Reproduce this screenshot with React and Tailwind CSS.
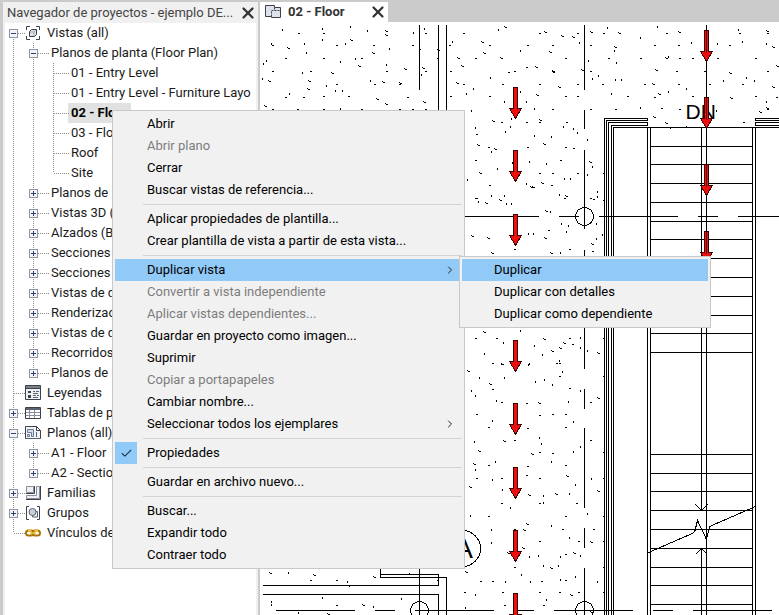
import { useState } from 'react';
import { X, Check, ChevronRight } from 'lucide-react';
import clsx from 'clsx';

const VIEW_GROUPS = [
  'Planos de', 'Vistas 3D (', 'Alzados (B', 'Secciones', 'Secciones',
  'Vistas de d', 'Renderizac', 'Vistas de d', 'Recorridos', 'Planos de',
];

const TREE = [
  {
    label: 'Vistas (all)',
    icon: 'views',
    open: true,
    children: [
      {
        label: 'Planos de planta (Floor Plan)',
        open: true,
        children: [
          { label: '01 - Entry Level' },
          { label: '01 - Entry Level - Furniture Layo' },
          { label: '02 - Floor', selected: true },
          { label: '03 - Floor' },
          { label: 'Roof' },
          { label: 'Site' },
        ],
      },
      ...VIEW_GROUPS.map((label) => ({ label, children: [] })),
    ],
  },
  { label: 'Leyendas', icon: 'legends' },
  { label: 'Tablas de p', icon: 'schedules', children: [] },
  {
    label: 'Planos (all)',
    icon: 'sheets',
    open: true,
    children: [
      { label: 'A1 - Floor', children: [] },
      { label: 'A2 - Sectio', children: [] },
    ],
  },
  { label: 'Familias', icon: 'families', children: [] },
  { label: 'Grupos', icon: 'groups', children: [] },
  { label: 'Vínculos de', icon: 'links' },
];

const MENU = [
  [
    { label: 'Abrir' },
    { label: 'Abrir plano', disabled: true },
    { label: 'Cerrar' },
    { label: 'Buscar vistas de referencia...' },
  ],
  [
    { label: 'Aplicar propiedades de plantilla...' },
    { label: 'Crear plantilla de vista a partir de esta vista...' },
  ],
  [
    {
      label: 'Duplicar vista',
      active: true,
      more: true,
      sub: [
        { label: 'Duplicar', active: true },
        { label: 'Duplicar con detalles' },
        { label: 'Duplicar como dependiente' },
      ],
    },
    { label: 'Convertir a vista independiente', disabled: true },
    { label: 'Aplicar vistas dependientes...', disabled: true },
    { label: 'Guardar en proyecto como imagen...' },
    { label: 'Suprimir' },
    { label: 'Copiar a portapapeles', disabled: true },
    { label: 'Cambiar nombre...' },
    { label: 'Seleccionar todos los ejemplares', more: true },
  ],
  [{ label: 'Propiedades', checked: true }],
  [{ label: 'Guardar en archivo nuevo...' }],
  [{ label: 'Buscar...' }, { label: 'Expandir todo' }, { label: 'Contraer todo' }],
];

const ICONS = {
  views: (
    <>
      <path d="M5 1.500H1.500V5M1.500 11v3.500H5M11 1.500h3.500V5M14.500 11v3.500H11" stroke="#3c424b" />
      <path d="M4.500 6.500l2-2h5v5l-2 2h-5z" fill="#dfe2ea" stroke="#3c424b" strokeLinejoin="round" />
      <path d="M5 7h4v4M9 7l2-2" stroke="#a3a9b6" />
    </>
  ),
  legends: (
    <>
      <path d="M.5 .5h15v14H.5z" fill="#eef0f3" stroke="#3c424b" />
      <path d="M1 2h14" stroke="#7b818c" strokeWidth="2" />
      <path d="M1 3.500h14" stroke="#3c424b" />
      <path d="M3 6h3v2H3zM3 10h3v3H3z" fill="#3c424b" />
      <path d="M8 6.500h2M11 6.500h3M8 8.500h5M8 10.500h3M12 10.500h2M8 12.500h5" stroke="#5b6270" />
    </>
  ),
  schedules: (
    <>
      <path d="M.5 2.500h15v11H.5z" fill="#fff" stroke="#3c424b" />
      <path d="M1 4h14" stroke="#5b6270" strokeWidth="2" />
      <path d="M1 7.500h14M1 10.500h14M4.500 5v8M9.500 5v8" stroke="#8a8f99" />
    </>
  ),
  sheets: (
    <>
      <path d="M.5 1.500h11l4 4v8H.5z" fill="#f1f3f6" stroke="#3c424b" />
      <path d="M11.500 1.500v4h4z" fill="#fff" stroke="#3c424b" />
      <path d="M2.500 4.500h6v7h-2v-4h-4zM2.500 9.500h2v2h-2z" stroke="#6b7a99" fill="#d7dce6" />
      <path d="M11.500 7v5M1 13.500h14" stroke="#5b6270" />
    </>
  ),
  families: (
    <>
      <path d="M1.500 1.500h7v6h-7zM11.500 1.500h3v12h-13v-3h10z" fill="#eef0f3" stroke="#8a8f99" />
      <path d="M1 8.500h8.500V1M1 14.500h14.500V1" stroke="#3c424b" />
    </>
  ),
  groups: (
    <>
      <path d="M4 1.500H1.500v13H4M12 1.500h2.500v13H12" stroke="#3c424b" />
      <path d="M7.500 6.500h5v5.500h-5z" fill="#eef0f3" stroke="#5b6270" />
      <circle cx="7.500" cy="7" r="3.500" fill="#c9cfdb" stroke="#5b6270" />
    </>
  ),
  links: (
    <>
      <rect x="1" y="5.500" width="7.500" height="5" rx="2.500" stroke="#a87400" strokeWidth="2" />
      <rect x="7.500" y="5.500" width="7.500" height="5" rx="2.500" stroke="#a87400" strokeWidth="2" />
      <path d="M3 5.500h3.500M9.500 5.500H13M5 8h6" stroke="#f5c431" strokeWidth="1.500" />
    </>
  ),
};

const TreeIcon = ({ name }) => (
  <svg width="16" height="16" viewBox="0 0 16 16" fill="none" className="shrink-0" aria-hidden="true">
    {ICONS[name]}
  </svg>
);

// Guide line segment of one indent column. up / down are the halves of the vertical line.
const Guide = ({ up, down, stub = 0 }) => (
  <svg width="20" height="20" viewBox="0 0 20 20" className="shrink-0 overflow-visible" aria-hidden="true">
    <g stroke="#8c8c8c" strokeDasharray="1 1" fill="none">
      {up && <path d="M8.500 0v10" />}
      {down && <path d="M8.500 10v10" />}
      {stub > 0 && <path d={`M9 10.500h${stub}`} />}
    </g>
  </svg>
);

const TreeNode = ({ node, lines = [], depth = 0, first, last }) => {
  const [open, setOpen] = useState(!!node.open);
  const hasBox = !!node.children;

  return (
    <li>
      <div className="flex h-5 items-center">
        {lines.map((on, i) => (
          <Guide key={i} up={on} down={on} />
        ))}
        <div className="relative flex shrink-0">
          <Guide up={!first} down={!last} stub={depth === 0 ? 11 : 15} />
          {hasBox && (
            <button
              type="button"
              aria-label={`${open ? 'Contraer' : 'Expandir'} ${node.label}`}
              className="absolute top-[6px] left-1 size-[9px] border border-[#8f96a3] bg-[#f3f4f7]"
              onClick={() => setOpen(!open)}
            >
              <svg width="7" height="7" viewBox="0 0 7 7" className="block" stroke="#2f3f73">
                <path d={open ? 'M1 3.5h5' : 'M1 3.5h5M3.5 1v5'} />
              </svg>
            </button>
          )}
        </div>
        {node.icon && <TreeIcon name={node.icon} />}
        <span
          className={clsx(
            'ml-[3px] h-5 px-[3px] whitespace-nowrap leading-5',
            node.selected && 'bg-[#e1e1e1] font-bold text-black'
          )}
        >
          {node.label}
        </span>
      </div>
      {open && node.children.length > 0 && (
        <ul>
          {node.children.map((child, i) => (
            <TreeNode
              key={i}
              node={child}
              depth={depth + 1}
              lines={[...lines, !last]}
              last={i === node.children.length - 1}
            />
          ))}
        </ul>
      )}
    </li>
  );
};

const MenuItem = ({ item }) => (
  <li className="relative" role="none">
    <button
      type="button"
      role={item.checked ? 'menuitemcheckbox' : 'menuitem'}
      aria-checked={item.checked}
      aria-haspopup={item.more ? 'menu' : undefined}
      disabled={item.disabled}
      className={clsx(
        'flex h-[22px] w-full items-center pr-1.5 text-left whitespace-nowrap disabled:text-[#7d7d7d]',
        item.active ? 'bg-[#91c9f7]' : 'enabled:hover:bg-[#91c9f7]'
      )}
    >
      <span className={clsx('mr-2.5 flex size-[22px] items-center justify-center', item.checked && 'bg-[#91c9f7]')}>
        {item.checked && <Check size={13} color="#1d3a55" />}
      </span>
      <span className="grow leading-[22px]">{item.label}</span>
      {item.more && <ChevronRight size={12} color="#222" />}
    </button>
    {item.sub && (
      <div className="absolute -top-[3px] left-full -ml-[3px] w-[252px]">
        <Menu groups={[item.sub]} label={item.label} />
      </div>
    )}
  </li>
);

const Menu = ({ groups, label }) => (
  <div role="menu" aria-label={label} className="border border-[#c9c9c9] bg-[#f1f1f1] p-[2px] text-black">
    {groups.map((items, i) => (
      <ul key={i} role="group">
        {i > 0 && <li role="separator" className="my-[3px] ml-7 h-px bg-[#d4d4d4]" />}
        {items.map((item) => (
          <MenuItem key={item.label} item={item} />
        ))}
      </ul>
    ))}
  </div>
);

// Concrete hatch: h = short flat tick, v = short upright tick, d = slanted tick
const HATCH = {
  h: `297,33 322,33 424,33 335,45 271,45 372,45 411,45 418,49 284,58 322,58 360,58 436,58 271,71 309,71 385,71 424,71
    335,84 373,84 398,84 284,97 302,97 322,96 347,96 406,97 271,109 296,109 322,109 360,109 398,109 411,109 424,109
    462,33 448,45 488,45 474,58 449,71 507,72 513,71 462,84 501,84 488,96 449,96 500,122 475,134 487,147 474,160 488,185
    474,198 538,33 526,45 551,45 576,33 564,58 589,45 602,33 607,58 525,67 589,71 538,84 576,84 601,84 564,96 576,96
    626,96 551,109 589,109 614,109 538,122 525,122 526,147 565,122 572,148 564,147 559,160 538,173 551,173 576,173
    602,173 550,185 563,198 589,198 602,200 665,33 653,45 677,45 639,58 678,58 691,58 716,58 738,33 728,45 766,33
    754,58 675,71 703,71 766,71 643,84 677,84 708,84 741,84 653,97 691,96 754,96 775,97 660,108 678,109 742,122 766,109
    475,198 592,199 547,230 513,249 568,249 591,251 474,338 495,338 568,338 571,344 602,338 555,363 491,363 500,402
    491,389 475,414 487,427 475,478 487,465 500,478 500,503 487,516 525,403 558,363 558,376 568,388 564,414 551,414
    538,415 526,428 564,427 589,402 602,376 513,440 538,452 551,453 589,440 602,452 526,466 564,465 513,478 525,475
    538,478 602,478 538,503 575,503 602,516 564,516 513,529 538,541 561,529 577,541 592,529 602,541 564,554 513,567
    479,581 491,581 540,581 564,580 602,567 463,592 501,592 538,592 542,605 558,592 577,592 602,592 503,605 309,580
    335,580 335,605 436,580`,
  v: `282,28 322,27 322,38 350,25 367,29 413,31 424,27 345,42 271,42 304,42 306,51 389,47 266,59 263,62 340,60 355,57
    386,63 302,71 421,73 262,77 326,84 370,79 335,89 342,89 289,92 340,107 452,40 498,28 490,76 466,92 473,87 504,100
    471,109 511,117 510,125 475,126 505,130 491,150 512,161 497,167 467,178 491,194 478,200 506,202 520,49 579,41
    607,26 614,49 616,61 588,59 598,74 615,78 621,78 592,77 520,90 611,92 526,100 534,107 563,125 573,127 577,131
    587,138 534,134 551,135 529,160 546,162 592,165 587,173 570,177 564,177 526,182 597,190 657,25 640,36 691,41
    668,55 738,28 717,42 742,40 766,42 746,76 754,79 723,79 686,87 668,90 766,100 640,106 716,109 670,126 686,125
    504,194 511,202 550,210 559,193 561,222 597,195 533,232 528,232 568,224 566,230 596,222 596,237 602,233 560,251
    503,341 520,329 534,344 542,353 580,336 580,346 587,349 484,352 528,363 559,359 471,389 475,394 479,376 501,362
    504,376 496,399 492,419 474,440 475,468 495,460 492,478 502,488 510,506 470,514 491,528 491,541 529,362 535,380
    544,378 552,383 562,370 580,389 568,400 573,420 539,436 541,442 573,450 580,445 551,460 543,494 569,492 575,483
    591,477 543,501 587,512 551,524 569,536 529,555 560,555 580,554 538,554 543,564 558,564 521,573 505,580 530,580
    560,578 575,575 597,580 475,593 546,598 465,606 288,571 347,580 349,584 271,603 271,600 322,596 373,605 298,611
    401,597`,
  d: `385,30 385,34 350,39 287,47 372,52 437,49 358,65 404,68 331,72 422,67 268,80 308,80 382,81 399,82 307,88 376,98
    423,101 264,105 385,103 481,41 483,52 504,26 457,57 461,65 500,57 456,82 492,120 477,144 494,148 479,172 499,199
    544,31 549,51 561,35 572,36 590,31 618,32 614,46 535,66 552,70 552,71 581,69 558,86 536,94 539,119 543,143 589,161
    541,182 530,186 532,186 565,195 678,31 665,57 766,30 772,46 776,65 655,69 729,72 652,83 772,86 658,93 730,97
    653,116 665,122 766,107 759,111 485,202 545,210 471,235 487,237 544,237 591,243 491,252 550,252 483,331 543,338
    551,350 563,342 559,347 597,352 501,363 467,370 489,383 503,440 478,450 473,463 469,486 538,402 597,397 531,453
    566,475 528,494 555,493 597,490 526,523 523,529 590,541 522,547 507,552 573,552 550,567 465,571 570,594 590,611
    269,572 313,574 373,576 409,573 362,604 327,613`,
};
const TICK = { h: 'h2', v: 'v2', d: 'l2 1.500' };

const hatchPath = (kind) =>
  HATCH[kind]
    .split(/\s+/)
    .map((p) => `M${p}${TICK[kind]}`)
    .join('');

const TREADS = [146, 164, 183, 202, 221, 239, 258, 277, 296, 315, 333, 352, 454, 473, 491, 510, 529, 548, 567, 585, 604];

const Arrow = ({ x, y }) => (
  <path
    d={`M${x - 2} ${y}h4v21h4l-6 10l-6 -10h4z`}
    fill="#f20d0d"
    stroke="#3a0000"
  />
);

const FloorPlan = () => (
  <svg className="size-full" role="img" aria-label="02 - Floor" fill="none" stroke="#000" shapeRendering="crispEdges">
    <g transform="translate(-259.5 -21.5)">
      <path d={hatchPath('h') + hatchPath('v') + hatchPath('d')} />
      {/* grid lines */}
      <path d="M419 24v65M438 24v90M446 24v90M419 560v55" />
      <path d="M584 24v65M584 109v19M584 149v79M584 249v20M584 320v48M584 388v20M584 427v80M584 527v20M584 567v200" />
      <path d="M464 216h74M558 216h20M598 216h79M697 216h20M737 216h79M857 216h20M897 216h79" />
      <path d="M275 610h79M374 610h20M414 610h79M513 610h20M553 610h79M652 610h20M692 610h79" />
      <circle cx="584" cy="216" r="9" />
      <circle cx="584" cy="610" r="9" />
      <circle cx="419" cy="610" r="9" />
      <circle cx="462" cy="548" r="18" />
      {/* walls */}
      <path d="M380 568v9M380 574h58v11H262M380 577h66v200M262 594h176v200" />
      <path d="M647 118h-43v700M647 120h-41v700M647 122h-39v700M647 125h-36v700M647 118v2M647 122v3" />
      <path d="M613 818V127H1200M1200 118H755v2H1200M1200 122H755v3H1200" />
      {/* stairs */}
      <path d="M647 127v700M650 127v700M752 127v700M755 127v700M706 24v800M701 127v383M701 548v300" />
      <path d={TREADS.map((y) => `M650 ${y}h102`).join('')} />
      <path d="M695 504l6 6l6 -6M695 554l6 -6l6 6" />
      <path d="M648 552l46 -20l3 -12l9 19l3 -13l46 -20" />
      <g stroke="none" fill="#000" className="font-['Liberation_Sans',sans-serif]">
        <text x="685" y="118" fontSize="21">DN</text>
        <text x="463" y="557" fontSize="28" textAnchor="middle">A</text>
      </g>
      {[87, 150, 214, 277, 340, 403, 467, 530, 593].map((y) => (
        <Arrow key={y} x={515} y={y} />
      ))}
      {[30, 97, 164, 231].map((y) => (
        <g key={y}>
          <Arrow x={706} y={y} />
          <path d={`M706 ${y}v22`} stroke="#5a0808" />
        </g>
      ))}
    </g>
  </svg>
);

const App = () => {
  return (
    <div className="relative flex h-screen overflow-hidden bg-[#cbcbcb] pt-[2px] pl-[3px] font-[Roboto,sans-serif] text-[13px] text-[#1a1a1a]">
      <aside className="flex w-[255px] shrink-0 flex-col bg-[#f0f0f0]">
        <header className="flex h-[21px] items-center justify-between pr-px pl-1">
          <h1 className="text-[13px] leading-5 whitespace-nowrap text-[#444]">Navegador de proyectos - ejemplo DE...</h1>
          <button type="button" aria-label="Cerrar navegador">
            <X size={18} strokeWidth={3} color="#333" />
          </button>
        </header>
        <nav className="mr-[2px] ml-[2px] grow overflow-hidden bg-white" aria-label="Navegador de proyectos">
          <ul>
            {TREE.map((node, i) => (
              <TreeNode key={node.label} node={node} first={i === 0} last={i === TREE.length - 1} />
            ))}
          </ul>
        </nav>
      </aside>

      <main className="ml-[2px] flex min-w-0 grow flex-col">
        <div className="flex h-5 shrink-0">
          <div className="flex w-32 items-center bg-white pr-px pl-[5px]">
            <svg width="16" height="16" viewBox="0 0 16 16" fill="none" aria-hidden="true">
              <path d="M.5 1.500h9v2h6v10h-9v-1h-6z" fill="#dde1ea" stroke="#3c424b" />
              <path d="M6.500 12.500v-6h9M9.500 3.500v3" stroke="#3c424b" strokeDasharray="2 1" />
            </svg>
            <span className="ml-[7px] grow leading-5 font-bold whitespace-nowrap text-[#333]">02 - Floor</span>
            <button type="button" aria-label="Cerrar vista">
              <X size={18} strokeWidth={3} color="#333" />
            </button>
          </div>
        </div>
        <div className="min-h-0 grow overflow-hidden bg-white">
          <FloorPlan />
        </div>
      </main>

      <div className="absolute top-[110px] left-[112px] w-[353px]">
        <Menu groups={MENU} label="Vista" />
      </div>
    </div>
  );
};

export default App;
